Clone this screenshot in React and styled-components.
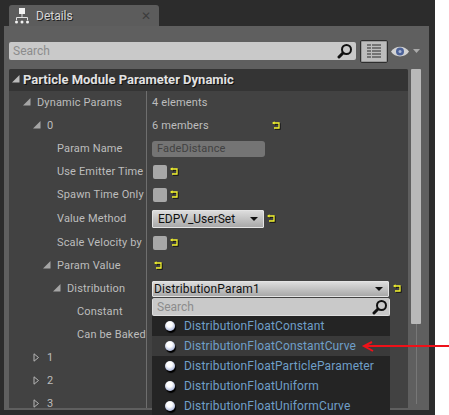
import React from 'react';
import styled, { createGlobalStyle } from 'styled-components';

const GlobalStyle = createGlobalStyle`
  html, body { margin: 0; padding: 0; background: #fff; }
  body { font-family: Roboto, "Liberation Sans", sans-serif; }
`;

const Page = styled.div`
  position: relative;
  width: 449px;
  height: 415px;
  overflow: hidden;
  background: #fff;
`;

const Window = styled.div`
  width: 435px;
  height: 415px;
  box-sizing: border-box;
  padding: 5px 6px 5px 4px;
  background: #2c2c2c;
  display: flex;
  flex-direction: column;
`;

const Tab = styled.div`
  width: 150px;
  height: 21px;
  margin-left: 5px;
  box-sizing: border-box;
  padding: 0 8px 0 5px;
  background: #5c5c5c;
  border-radius: 3px 3px 0 0;
  display: flex;
  align-items: center;
  gap: 6px;
  color: #d6d6d6;
  font-size: 12px;
  text-shadow: 1px 1px 0 #222;
`;

const TabTitle = styled.span`
  flex: 1;
`;

const TabClose = styled.span`
  color: #3d3d3d;
  font-size: 12px;
  text-shadow: none;
`;

const Panel = styled.div`
  flex: 1;
  min-height: 0;
  box-sizing: border-box;
  padding: 13px 0 2px 5px;
  background: #5f5f5f;
  display: flex;
  flex-direction: column;
`;

const SearchRow = styled.div`
  height: 24px;
  display: flex;
  align-items: center;
`;

const SearchBox = styled.div`
  width: 347px;
  height: 18px;
  box-sizing: border-box;
  padding: 0 3px 0 4px;
  background: #c9c9c9;
  border-radius: 2px;
  display: flex;
  align-items: center;
  justify-content: space-between;
  color: #8c8c8c;
  font-size: 12px;
`;

const ViewButton = styled.div`
  width: 28px;
  height: 23px;
  margin-left: 4px;
  box-sizing: border-box;
  border: 1px solid #2e2e2e;
  box-shadow: inset 0 0 0 1px #9a9a9a;
  border-radius: 2px;
  background: #bdbdbd;
  display: flex;
  align-items: center;
  justify-content: center;
`;

const EyeWrap = styled.div`
  margin-left: 3px;
  display: flex;
  align-items: center;
  gap: 3px;
`;

const Body = styled.div`
  flex: 1;
  min-height: 0;
  margin-top: 6px;
  display: flex;
`;

const Sheet = styled.div`
  width: 399px;
  flex: none;
  border-radius: 2px 2px 0 0;
  background: #424242;
  overflow: hidden;
`;

const Header = styled.div`
  height: 22px;
  box-sizing: border-box;
  padding: 0 0 2px 3px;
  background: #343434;
  display: flex;
  align-items: center;
  color: #e2e2e2;
  font-size: 13px;
  font-weight: 700;
  text-shadow: 1px 1px 0 #111;
  white-space: nowrap;
`;

const Row = styled.div`
  height: ${p => (p.$tall ? 24 : 23)}px;
  box-sizing: border-box;
  padding-top: ${p => (p.$tall ? 1 : 0)}px;
  background: linear-gradient(#6e6e6e, #6e6e6e) 137px 0 / 1px 100% no-repeat;
  display: flex;
`;

const NameCell = styled.div`
  width: 138px;
  box-sizing: border-box;
  padding: 0 0 1px ${p => p.$indent}px;
  display: flex;
  align-items: center;
  color: #bdbdbd;
  font-size: 11px;
  letter-spacing: 0.15px;
  white-space: nowrap;
`;

const Arrow = styled.span`
  width: ${p => p.$w}px;
  display: inline-flex;
  flex: none;
`;

const ValueCell = styled.div`
  flex: 1;
  box-sizing: border-box;
  padding-left: 5px;
  display: flex;
  align-items: center;
  color: #bdbdbd;
  font-size: 11px;
  letter-spacing: 0.15px;
`;

const ValueText = styled.span`
  margin-bottom: 1px;
`;

const NameInput = styled.div`
  width: 113px;
  height: 16px;
  box-sizing: border-box;
  padding-left: 5px;
  border-radius: 3px;
  background: #747474;
  color: #414141;
  line-height: 15px;
`;

const Check = styled.span`
  width: 14px;
  height: 14px;
  margin-left: 1px;
  border-radius: 2px;
  background: #a8a8a8;
`;

const Select = styled.div`
  width: ${p => p.$w}px;
  height: ${p => (p.$tight ? 16 : 18)}px;
  box-sizing: border-box;
  padding: 0 5px 0 ${p => (p.$tight ? 1 : 5)}px;
  border: 1px solid #e4e4e4;
  border-radius: 1px;
  background: linear-gradient(#dcdcdc, #a9a9a9);
  display: flex;
  align-items: center;
  justify-content: space-between;
  color: #111;
  font-size: 12px;
  letter-spacing: ${p => (p.$tight ? 0.15 : 0)}px;
`;

const Caret = styled.span`
  width: 0;
  height: 0;
  border-left: 4px solid transparent;
  border-right: 4px solid transparent;
  border-top: 4px solid #111;
`;

const Reset = styled.svg`
  margin: 0 0 2px ${p => p.$gap || 5}px;
  flex: none;
  filter: drop-shadow(1px 1px 0 #111);
`;

const Scrollbar = styled.div`
  width: 21px;
  box-sizing: border-box;
  padding-left: 3px;
  background: #5f5f5f;
`;

const Track = styled.div`
  width: 10px;
  height: 335px;
  background: linear-gradient(#777, #777) 5px 0 / 1px 100% no-repeat;
`;

const Thumb = styled.div`
  height: 255px;
  background: #b9b9b9;
  border-radius: 1px;
`;

const Menu = styled.div`
  position: absolute;
  left: 152px;
  top: 298px;
  width: 238px;
  height: 117px;
  background: #242424;
`;

const MenuSearch = styled(SearchBox)`
  width: 238px;
  padding-right: 1px;
  border: 1px solid #dedede;
  border-top-color: #c9c9c9;
`;

const MenuItem = styled.div`
  height: 20px;
  box-sizing: border-box;
  padding-left: 13px;
  background: ${p => (p.$active ? '#3a3a3a' : 'transparent')};
  display: flex;
  align-items: center;
  gap: 9px;
  color: #6f9fc8;
  font-size: 12px;
  letter-spacing: 0.15px;
`;

const Ball = styled.span`
  width: 10px;
  height: 10px;
  border-radius: 50%;
  background: radial-gradient(circle at 45% 35%, #ffffff 30%, #bcc6e4 65%, #858db2);
  box-shadow: 1px 2px 1px #000;
`;

const RedArrow = styled.svg`
  position: absolute;
  left: 360px;
  top: 336px;
`;

const TabIcon = () => (
  <svg width="16" height="17" viewBox="0 0 16 17" fill="none">
    <rect x="5" y="1" width="6" height="6" fill="#f2f2f2" />
    <path d="M8 7v3M2.500 13v-2.500h11V13" stroke="#e0e0e0" />
    <circle cx="2.500" cy="15" r="1.500" fill="#f2f2f2" />
    <circle cx="8" cy="15" r="1.500" fill="#f2f2f2" />
    <circle cx="13.500" cy="15" r="1.500" fill="#f2f2f2" />
  </svg>
);

const Lens = () => (
  <svg width="16" height="16" viewBox="0 0 16 16" fill="none">
    <circle cx="9.500" cy="6.500" r="4.500" stroke="#111" strokeWidth="2" />
    <path d="M6 10 2 14" stroke="#111" strokeWidth="3" strokeLinecap="round" />
  </svg>
);

const GridIcon = () => (
  <svg width="14" height="15" viewBox="0 0 14 15">
    {[0, 3, 6, 9, 12].map(y => (
      <g key={y} fill="#747474">
        <rect x="0" y={y} width="4" height="2" />
        <rect x="5" y={y} width="9" height="2" />
      </g>
    ))}
  </svg>
);

const Eye = () => (
  <svg width="18" height="11" viewBox="0 0 18 11">
    <path d="M0 5.500C4 -1 14 -1 18 5.500 14 12 4 12 0 5.500Z" fill="#d2d2d2" />
    <circle cx="9" cy="5.500" r="4" fill="#4d6399" />
    <circle cx="9" cy="5.500" r="1.500" fill="#a9b6d6" />
  </svg>
);

const Down = () => (
  <svg width="9" height="9" viewBox="0 0 9 9"><path d="M1 2H8L4.500 6Z" fill="#aaa" /></svg>
);

const Open = ({ c = '#a5a5a5', w = 14 }) => (
  <Arrow $w={w}>
    <svg width="8" height="8" viewBox="0 0 8 8"><path d="M0 7.500 7.500 0V7.500Z" fill={c} /></svg>
  </Arrow>
);

const Closed = () => (
  <Arrow $w={14}>
    <svg width="7" height="9" viewBox="0 0 7 9" fill="none"><path d="M1 .8V8.200L5.500 4.500Z" stroke="#b5b5b5" /></svg>
  </Arrow>
);

const ResetIcon = ({ gap }) => (
  <Reset $gap={gap} width="8" height="8" viewBox="0 0 8 8" fill="none">
    <path d="M2 2H7V7H2" stroke="#f5f52e" strokeWidth="1.300" />
    <path d="M0 2 2.500 .2V3.800Z" fill="#f5f52e" />
  </Reset>
);

const menuItems = [
  'DistributionFloatConstant',
  'DistributionFloatConstantCurve',
  'DistributionFloatParticleParameter',
  'DistributionFloatUniform',
  'DistributionFloatUniformCurve',
];

export default function App() {
  return (
    <Page>
      <GlobalStyle />
      <Window>
        <Tab>
          <TabIcon />
          <TabTitle>Details</TabTitle>
          <TabClose>✕</TabClose>
        </Tab>
        <Panel>
          <SearchRow>
            <SearchBox>
              Search
              <Lens />
            </SearchBox>
            <ViewButton><GridIcon /></ViewButton>
            <EyeWrap><Eye /><Down /></EyeWrap>
          </SearchRow>
          <Body>
            <Sheet>
              <Header><Open c="#bbb" w={11} />Particle Module Parameter Dynamic</Header>
              <Row>
                <NameCell $indent={14}><Open />Dynamic Params</NameCell>
                <ValueCell><ValueText>4 elements</ValueText></ValueCell>
              </Row>
              <Row>
                <NameCell $indent={24}><Open />0</NameCell>
                <ValueCell><ValueText>6 members</ValueText><ResetIcon gap={63} /></ValueCell>
              </Row>
              <Row>
                <NameCell $indent={48}>Param Name</NameCell>
                <ValueCell><NameInput>FadeDistance</NameInput></ValueCell>
              </Row>
              <Row>
                <NameCell $indent={48}>Use Emitter Time</NameCell>
                <ValueCell><Check /><ResetIcon gap={3} /></ValueCell>
              </Row>
              <Row>
                <NameCell $indent={48}>Spawn Time Only</NameCell>
                <ValueCell><Check /><ResetIcon gap={3} /></ValueCell>
              </Row>
              <Row $tall>
                <NameCell $indent={48}>Value Method</NameCell>
                <ValueCell>
                  <Select $w={112}>EDPV_UserSet<Caret /></Select>
                  <ResetIcon gap={3} />
                </ValueCell>
              </Row>
              <Row $tall>
                <NameCell $indent={48}>Scale Velocity by</NameCell>
                <ValueCell><Check /><ResetIcon gap={3} /></ValueCell>
              </Row>
              <Row>
                <NameCell $indent={34}><Open />Param Value</NameCell>
                <ValueCell><ResetIcon gap={2} /></ValueCell>
              </Row>
              <Row>
                <NameCell $indent={44}><Open />Distribution</NameCell>
                <ValueCell>
                  <Select $w={237} $tight>DistributionParam1<Caret /></Select>
                  <ResetIcon gap={4} />
                </ValueCell>
              </Row>
              <Row><NameCell $indent={68}>Constant</NameCell></Row>
              <Row><NameCell $indent={68}>Can be Baked</NameCell></Row>
              <Row><NameCell $indent={24}><Closed />1</NameCell></Row>
              <Row><NameCell $indent={24}><Closed />2</NameCell></Row>
              <Row><NameCell $indent={24}><Closed />3</NameCell></Row>
            </Sheet>
            <Scrollbar><Track><Thumb /></Track></Scrollbar>
          </Body>
        </Panel>
      </Window>
      <Menu>
        <MenuSearch>
          Search
          <Lens />
        </MenuSearch>
        {menuItems.map((item, i) => (
          <MenuItem key={item} $active={i === 1}>
            <Ball />
            {item}
          </MenuItem>
        ))}
      </Menu>
      <RedArrow width="89" height="20" viewBox="0 0 89 20" fill="none">
        <path d="M89 10H4" stroke="#ee1119" strokeWidth="2" />
        <path d="M12 6 4 10 13 15" stroke="#ee1119" strokeWidth="2" />
      </RedArrow>
    </Page>
  );
}
